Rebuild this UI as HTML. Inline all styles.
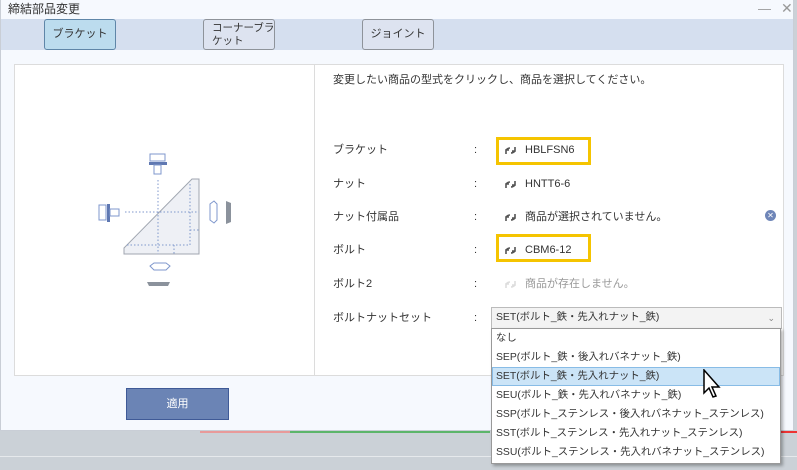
<!DOCTYPE html>
<html><head><meta charset="utf-8"><style>
*{margin:0;padding:0;box-sizing:border-box}
body{width:797px;height:470px;overflow:hidden;background:#cbd1d7;font-family:"Liberation Sans","Noto Sans CJK JP",sans-serif;font-size:11px;color:#333;position:relative;white-space:nowrap}
.abs{position:absolute;line-height:14px}
.win{left:0;top:0;width:794px;height:431px;background:#f6f9fe;border:1px solid #c9ced6;border-top:none}
.tabbar{left:1px;top:19px;width:792px;height:31px;background:#d5dfef}
.tab{height:31px;border:1px solid #8e939a;border-radius:3px;background:#dde3f0;display:flex;align-items:center;justify-content:center;font-size:11px;color:#333;line-height:13px}
.panel{left:14px;top:64px;width:770px;height:312px;background:#fff;border:1px solid #dcdcdc}
.lbl{left:333px}
.col{left:474px}
.val{left:525px}
.ic{left:505px}
.yb{border:3px solid #f5c400;left:496px;width:95px;height:28px}
.list div{height:19px;line-height:19px;padding-left:4px;font-size:10.4px}
</style></head><body>
<svg width="0" height="0" style="position:absolute"><defs><g id="r"><path d="M1 9 L1 5 L4 5 M1 5 Q3 3 5 3" stroke="currentColor" stroke-width="1.6" fill="none"/><path d="M10 2 L10 6 L7 6 M10 6 Q8 8 6 8" stroke="currentColor" stroke-width="1.6" fill="none"/></g></defs></svg>
<div class="abs win"></div>
<div class="abs" style="left:8px;top:2px;font-size:12px;color:#333">締結部品変更</div>
<div class="abs" style="left:758px;top:2px;color:#999;font-size:13px">—</div>
<div class="abs" style="left:781px;top:1px;color:#999;font-size:14px">✕</div>
<div class="abs tabbar"></div>
<div class="abs tab" style="left:44px;top:19px;width:72px;background:#bcdcee;border-color:#5f86a8">ブラケット</div>
<div class="abs tab" style="left:203px;top:19px;width:72px;justify-content:flex-start;padding-left:8px;font-size:10.5px;white-space:nowrap"><span>コーナーブラ<br>ケット</span></div>
<div class="abs tab" style="left:362px;top:19px;width:72px">ジョイント</div>
<div class="abs panel"></div>
<div class="abs" style="left:314px;top:65px;width:1px;height:310px;background:#dcdcdc"></div>
<svg class="abs" style="left:80px;top:140px" width="170" height="160" viewBox="0 0 170 160">
<path d="M44 108 L112 39 L119 39 L119 114 L44 114 Z" fill="#eef0f5" stroke="#a0a6b0" stroke-width="1"/>
<g stroke="#7f97cc" stroke-width="1" stroke-dasharray="1.5,2" fill="none">
<line x1="78" y1="40" x2="78" y2="114"/><line x1="45" y1="72" x2="119" y2="72"/>
<line x1="110" y1="44" x2="110" y2="105"/><line x1="47" y1="105" x2="110" y2="105"/>
<line x1="110" y1="90" x2="119" y2="90"/><line x1="94" y1="105" x2="94" y2="114"/>
</g>
<rect x="70" y="14" width="15" height="7" fill="#fff" stroke="#7f97cc"/>
<rect x="69" y="22" width="18" height="3" fill="#5f78b2"/>
<rect x="74" y="25" width="7" height="9" fill="#fff" stroke="#7f97cc"/>
<rect x="19" y="65" width="7" height="15" fill="#fff" stroke="#7f97cc"/>
<rect x="27" y="64" width="3" height="18" fill="#5f78b2"/>
<rect x="30" y="69" width="9" height="7" fill="#fff" stroke="#7f97cc"/>
<path d="M130 64 L134 61 L137 64 L137 80 L134 83 L130 80 Z" fill="#fff" stroke="#7f97cc"/>
<path d="M146 61 L151 63 L151 82 L146 84 Z" fill="#8b929c"/>
<path d="M70 126 L74 123 L86 123 L90 126 L86 130 L74 130 Z" fill="#fff" stroke="#7f97cc"/>
<path d="M67 142 L90 142 L88 146 L69 146 Z" fill="#8b929c"/>
</svg>
<div class="abs" style="left:333px;top:73px">変更したい商品の型式をクリックし、商品を選択してください。</div>
<div class="abs yb" style="top:137px"></div>
<div class="abs yb" style="top:234px"></div>
<div class="abs lbl" style="top:143px">ブラケット</div><div class="abs col" style="top:143px">:</div><svg class="abs ic" style="top:145px;color:#555" width="11" height="10"><use href="#r"/></svg><div class="abs val" style="top:143px">HBLFSN6</div>
<div class="abs lbl" style="top:177px">ナット</div><div class="abs col" style="top:177px">:</div><svg class="abs ic" style="top:179px;color:#555" width="11" height="10"><use href="#r"/></svg><div class="abs val" style="top:177px">HNTT6-6</div>
<div class="abs lbl" style="top:210px">ナット付属品</div><div class="abs col" style="top:210px">:</div><svg class="abs ic" style="top:212px;color:#555" width="11" height="10"><use href="#r"/></svg><div class="abs val" style="top:210px">商品が選択されていません。</div>
<div class="abs" style="left:765px;top:210px;width:11px;height:11px;border-radius:50%;background:#6f86b8;color:#fff;font-size:8px;line-height:11px;text-align:center">✕</div>
<div class="abs lbl" style="top:243px">ボルト</div><div class="abs col" style="top:243px">:</div><svg class="abs ic" style="top:245px;color:#555" width="11" height="10"><use href="#r"/></svg><div class="abs val" style="top:243px">CBM6-12</div>
<div class="abs lbl" style="top:277px">ボルト2</div><div class="abs col" style="top:277px">:</div><svg class="abs ic" style="top:279px;color:#ddd" width="11" height="10"><use href="#r"/></svg><div class="abs val" style="top:277px;color:#999">商品が存在しません。</div>
<div class="abs lbl" style="top:311px">ボルトナットセット</div><div class="abs col" style="top:311px">:</div>
<div class="abs" style="left:491px;top:307px;width:291px;height:22px;border:1px solid #bbb;background:#f3f3f3;padding-left:4px;line-height:20px;font-size:10.4px">SET(ボルト_鉄・先入れナット_鉄)<span style="position:absolute;right:6px;color:#888;font-size:9px">⌄</span></div>
<div class="abs" style="left:126px;top:388px;width:103px;height:32px;background:#6b84b5;border:1px solid #3f5a97;color:#fff;text-align:center;line-height:30px">適用</div>
<div class="abs" style="left:200px;top:431px;width:90px;height:2px;background:#e89a9a"></div>
<div class="abs" style="left:290px;top:431px;width:200px;height:2px;background:#5cb56a"></div>
<div class="abs" style="left:780px;top:431px;width:17px;height:2px;background:#e33"></div>
<div class="abs" style="left:0;top:456px;width:797px;height:1px;background:#e6e9ec"></div>
<div class="abs list" style="left:491px;top:328px;width:290px;height:136px;background:#fff;border:1px solid #999;box-shadow:2px 2px 3px rgba(0,0,0,.3);overflow:hidden">
<div>なし</div>
<div>SEP(ボルト_鉄・後入れバネナット_鉄)</div>
<div style="background:#cbe4f7;border:1px solid #88bce6;line-height:17px;padding-left:3px">SET(ボルト_鉄・先入れナット_鉄)</div>
<div>SEU(ボルト_鉄・先入れバネナット_鉄)</div>
<div>SSP(ボルト_ステンレス・後入れバネナット_ステンレス)</div>
<div>SST(ボルト_ステンレス・先入れナット_ステンレス)</div>
<div>SSU(ボルト_ステンレス・先入れバネナット_ステンレス)</div>
</div>
<svg class="abs" style="left:703px;top:369px" width="22" height="32" viewBox="0 0 22 32"><path d="M1 1 L1 24 L6 19 L10 28 L13 27 L9 18 L16 18 Z" fill="#fff" stroke="#000" stroke-width="1.5"/></svg>
</body></html>
